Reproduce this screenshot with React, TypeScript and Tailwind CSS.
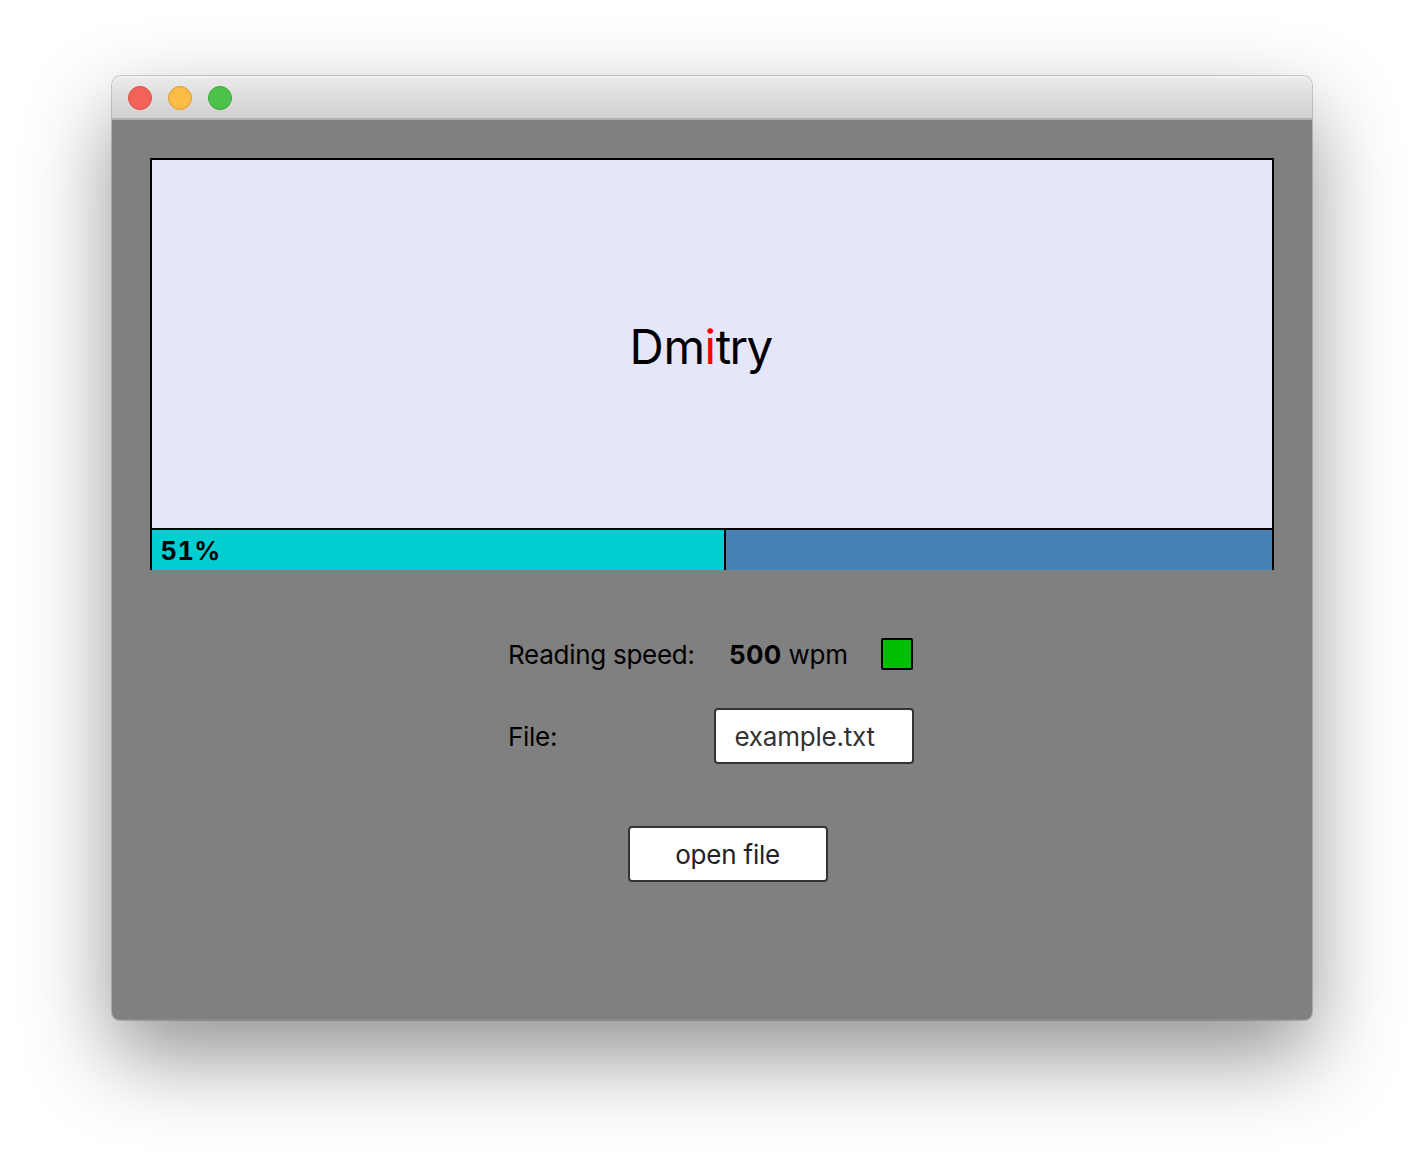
function TitleBar() {
  return (
    <header className="flex h-11 shrink-0 items-center gap-4 rounded-t-[9px] border-b-2 border-[#b2b2b2] bg-linear-to-b from-[#ebebeb] to-[#d0d0d0] px-4 pt-0.5 shadow-[inset_0_2px_0_#f2f2f2]">
      <span className="size-6 rounded-full border border-[#d94f45] bg-[#f36256]" />
      <span className="size-6 rounded-full border border-[#dc9b3a] bg-[#fabc46]" />
      <span className="size-6 rounded-full border border-[#3ba237] bg-[#4dc24a]" />
    </header>
  );
}

function Reader() {
  return (
    <section className="border-x-2 border-t-2 border-black">
      <div className="h-[368px] bg-[#e6e6fa] pt-[157px] pl-[477.5px] text-[47.5px] leading-[60px] whitespace-nowrap text-black">
        <span className="tracking-[-0.4px]">
          Dm<span className="text-[#ff0000]">i</span>
          <span className="tracking-[-1.7px]">try</span>
        </span>
      </div>
      <div className="flex h-[42px] border-t-2 border-black bg-[#4682b4]">
        <div className="flex w-[574px] items-center border-r-2 border-black bg-[#00ced1] pt-px pl-[8.5px] text-[25.5px] font-bold tracking-[0.4px] tabular-nums">
          51%
        </div>
      </div>
    </section>
  );
}

export default function App() {
  return (
    <main className="flex h-[1168px] w-[1424px] justify-center overflow-hidden bg-white pt-[76px] font-['Inter',sans-serif] text-[26px] leading-8 text-black">
      <div className="flex h-[944px] w-[1200px] flex-col rounded-t-[9px] rounded-b-[8px] bg-[#808080] shadow-[inset_0_-1px_0_#8c8c8c,0_0_0_1px_rgba(0,0,0,0.18),0_36px_86px_rgba(0,0,0,0.43)]">
        <TitleBar />
        <div className="px-[38px] pt-[38px]">
          <Reader />
        </div>
        <div className="mt-[68px] ml-[396px] flex w-[406px] flex-col">
          <div className="flex h-8 items-center">
            <span className="w-[221px] pt-px tracking-[-0.28px] whitespace-nowrap">Reading speed:</span>
            <span className="flex-1 pt-px whitespace-nowrap"><b className="tracking-[0.3px]">500</b><span className="tracking-[-0.3px]"> wpm</span></span>
            <span className="mr-[0.6px] size-8 rounded-[2px] border-2 border-black bg-[#00bf00]" />
          </div>
          <div className="mt-[38px] flex h-14 items-center justify-between">
            <span className="pt-px tracking-[-0.28px]">File:</span>
            <div className="-mr-[0.4px] flex h-14 w-[200px] items-center rounded-[4px] border-2 border-[#333] bg-white pt-px pl-[18px] tracking-[-0.2px] text-[#333]">
              <span>example.txt</span>
            </div>
          </div>
          <button className="mt-[62px] ml-[119.6px] flex h-14 w-[200px] items-center justify-center rounded-[4px] border-2 border-[#333] bg-white pt-px tracking-[-0.2px] text-[#222]">
            <span>open file</span>
          </button>
        </div>
      </div>
    </main>
  );
}
